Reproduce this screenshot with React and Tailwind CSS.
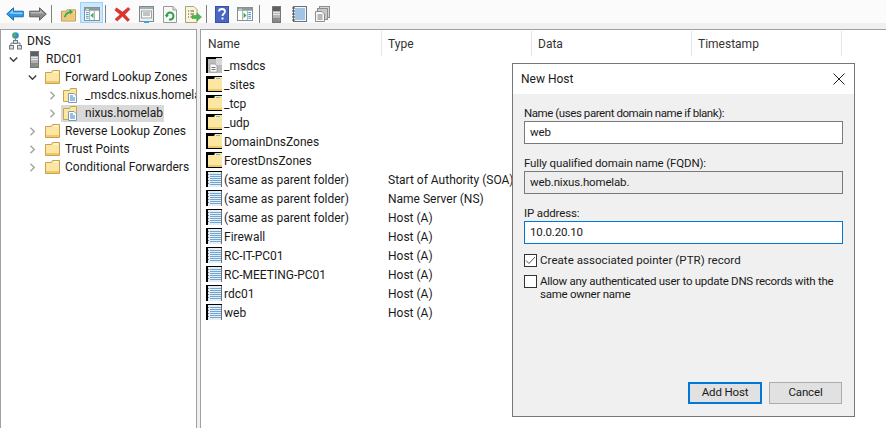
import React from 'react';

const FOLDER_A = '#fbe6a2';
const FOLDER_B = '#f0c96a';
const FOLDER_EDGE = '#c9a24f';

function BackIcon() {
  return (
    <svg width="18" height="14" viewBox="0 0 18 14">
      <path d="M.7 7 7.5.8v3.4h9.8v5.6H7.5v3.4z" fill="#2e9ae6" stroke="#1b6fb5" />
      <path d="M3 6.5 7 3v2.5h9.5v1.7z" fill="#8fd2f7" />
    </svg>
  );
}

function ForwardIcon() {
  return (
    <svg width="18" height="14" viewBox="0 0 18 14">
      <path d="M17.3 7 10.5.8v3.4H.7v5.6h9.8v3.4z" fill="#8b8b8b" stroke="#5f5f5f" />
      <path d="M1.5 5h9.5V3l4 3.5H1.5z" fill="#b9b9b9" />
    </svg>
  );
}

function UpFolderIcon() {
  return (
    <svg width="15" height="15" viewBox="0 0 16 16">
      <path d="M.5 4.500h5l1-1.500h9v12H.5z" fill="#f3d58d" stroke="#b5935a" />
      <path d="M1.500 6h13v8h-13z" fill="#eec878" />
      <path d="M3 11c1-4 3-6 6-6.500V2.500L13 5 9.500 8V6.300C7 7 5.500 8.500 5 11z" fill="#3aa655" />
    </svg>
  );
}

function WindowIcon({ arrow }) {
  return (
    <svg width="16" height="14" viewBox="0 0 17 15">
      <rect x=".5" y=".5" width="16" height="14" fill="#fff" stroke="#7d8a8f" />
      <rect x="1" y="1" width="15" height="3" fill="#8f9a9e" />
      <rect x="2" y="2" width="3" height="1" fill="#eee" />
      <path d="M6 4v10M11 4v10" stroke="#9aa5a9" />
      {arrow === 'left' ? (
        <>
          <path d="M2 6h3M2 8h3M2 10h3M2 12h3" stroke="#3d8fd0" />
          <path d="M10 6v6L7 9z" fill="#2fae4a" />
        </>
      ) : (
        <>
          <path d="M7 6v6l3-3z" fill="#2fae4a" />
          <path d="M12 6h3M12 8h3M12 10h3M12 12h3" stroke="#3d8fd0" />
        </>
      )}
    </svg>
  );
}

function DeleteIcon() {
  return (
    <svg width="17" height="16" viewBox="0 0 18 16">
      <path d="M2.500 1.500 9 6 15 1l2 2-5.500 5.500L16.500 14l-2 2L9 10.500 3.500 15.500 1 13.500 6.500 8.500 1 4z" fill="#e2322d" stroke="#b62624" strokeWidth=".5" />
    </svg>
  );
}

function PropertiesIcon() {
  return (
    <svg width="15" height="17" viewBox="0 0 15 17">
      <rect x=".5" y=".5" width="14" height="15" fill="#eef0f0" stroke="#808a8e" />
      <rect x="1" y="1" width="13" height="2" fill="#a4adb0" />
      <rect x="2.500" y="5" width="10" height="7" fill="#fbfbfb" stroke="#9aa2a5" />
      <path d="M4 7h7M4 9h7" stroke="#8a8a8a" />
      <rect x="5" y="15" width="5" height="2" fill="#38a3e0" />
    </svg>
  );
}

function RefreshIcon() {
  return (
    <svg width="14" height="17" viewBox="0 0 14 17">
      <path d="M.5.5H10l3.500 3.500v12.500H.5z" fill="#f8f8f8" stroke="#9a9a9a" />
      <path d="M10 .5V4h3.500" fill="#ddd" stroke="#9a9a9a" />
      <path d="M3.500 10a3.500 3.500 0 1 1 2.500 3.400" fill="none" stroke="#2f9e44" strokeWidth="2" />
      <path d="M1.800 9h4l-2 2.800z" fill="#2f9e44" />
    </svg>
  );
}

function ExportIcon() {
  return (
    <svg width="17" height="17" viewBox="0 0 17 17">
      <path d="M.5.500H9l3 3v13H.5z" fill="#fbf5d8" stroke="#a8a27e" />
      <path d="M3 5h1M3 8h1M3 11h1M5.500 5H9M5.500 8H9M5.500 11H8" stroke="#555" />
      <path d="M7 9.500h5V7l4.500 4-4.500 4v-2.500H7z" fill="#4cb84c" stroke="#379237" strokeWidth=".5" />
    </svg>
  );
}

function HelpIcon() {
  return (
    <svg width="14" height="17" viewBox="0 0 14 17">
      <rect width="14" height="17" fill="#3a51a8" />
      <rect x="1" y="1" width="12" height="15" fill="#4a66c2" />
      <path d="M4 5.500C4 3.500 5.500 3 7 3c2 0 3 1 3 2.500C10 8 7.500 7.500 7.500 10" fill="none" stroke="#fff" strokeWidth="1.800" />
      <rect x="6.500" y="11.500" width="2" height="2" fill="#fff" />
    </svg>
  );
}

function ServerIcon() {
  return (
    <svg width="9" height="17" viewBox="0 0 9 17">
      <rect x=".5" y=".5" width="8" height="16" fill="#b4b4b4" stroke="#777" />
      <rect x="1" y="1" width="7" height="4" fill="#5f5f5f" />
      <rect x="1" y="6" width="7" height="1" fill="#e8e8e8" />
      <rect x="1" y="8" width="7" height="1" fill="#e8e8e8" />
      <rect x="1" y="12" width="7" height="4" fill="#8a8a8a" />
      <rect x="6" y="13" width="1.500" height="1.500" fill="#6cc24a" />
    </svg>
  );
}

function NotebookIcon() {
  return (
    <svg width="15" height="16" viewBox="0 0 15 16">
      <rect x="1.500" y=".5" width="13" height="15" fill="#f4f7fa" stroke="#6b7278" />
      <path d="M3 3h10M3 5h10M3 7h10M3 9h10M3 11h10M3 13h10" stroke="#4c93cf" />
      <path d="M0 2h3M0 5h3M0 8h3M0 11h3M0 14h3" stroke="#444" />
    </svg>
  );
}

function CopiesIcon() {
  return (
    <svg width="15" height="16" viewBox="0 0 15 16">
      <rect x="4.500" y=".5" width="10" height="11" fill="#d6d6d6" stroke="#8d8d8d" />
      <rect x="2.500" y="2.500" width="10" height="11" fill="#c8c8c8" stroke="#8d8d8d" />
      <path d="M.5 5.500H7l2.500 2.500v7.500h-9z" fill="#f8f8f8" stroke="#8d8d8d" />
      <path d="M2.500 9h5M2.500 11h5M2.500 13h5" stroke="#777" />
    </svg>
  );
}

function DnsIcon() {
  return (
    <svg width="13" height="18" viewBox="0 0 13 18">
      <circle cx="6.500" cy="3.500" r="3.300" fill="#2f8fd0" />
      <path d="M4.500 2c1-1.500 3-1 3 .5S5.500 5 5.500 6.500C4 5.500 3.500 3.500 4.500 2z" fill="#55b24a" />
      <path d="M6.500 7v3M2 13v-2h9v2" fill="none" stroke="#777" />
      <rect x="4.500" y="8.500" width="4" height="3" fill="#ddd" stroke="#6f7c86" />
      <rect x=".5" y="13.500" width="4" height="3.500" fill="#ddd" stroke="#6f7c86" />
      <rect x="8.500" y="13.500" width="4" height="3.500" fill="#ddd" stroke="#6f7c86" />
    </svg>
  );
}

function FolderIcon() {
  return (
    <svg width="15" height="14" viewBox="0 0 15 14">
      <path d="M.5 2.500h6l1-2h7v13H.5z" fill={FOLDER_A} stroke={FOLDER_EDGE} />
      <path d="M1 4h13v9H1z" fill={FOLDER_A} />
      <path d="M1 11h13v2H1z" fill={FOLDER_B} />
      <rect x="9" y="1.500" width="4" height="1" fill="#fff" />
    </svg>
  );
}

function ZoneIcon() {
  return (
    <svg width="15" height="15" viewBox="0 0 15 15">
      <path d="M.5 2.500h6l1-2h6v13H.5z" fill={FOLDER_A} stroke={FOLDER_EDGE} />
      <path d="M5.500 5.500H11l2.500 2.500v6.500h-8z" fill="#fff" stroke="#7f9ab8" />
      <path d="M7 8h3M7 10h5M7 12h5" stroke="#2f7fc4" />
    </svg>
  );
}

function ListFolderIcon() {
  return (
    <svg width="16" height="16" viewBox="0 0 16 16" className="shrink-0">
      <rect width="16" height="16" fill="#000" />
      <path d="M2 3h6l1-2h7v14H2z" fill={FOLDER_A} />
      <path d="M2 13h14v2H2z" fill={FOLDER_B} />
      <rect x="10" y="2" width="4" height="1" fill="#6fb5e8" />
    </svg>
  );
}

function ListDelegationIcon() {
  return (
    <svg width="16" height="16" viewBox="0 0 16 16" className="shrink-0">
      <rect width="16" height="16" fill="#000" />
      <rect x="2" y="2" width="14" height="14" fill="#bcbcbc" />
      <rect x="10" y="1" width="6" height="7" fill="#d8d8d8" />
      <path d="M4 7h5l2 2v6H4z" fill="#fafafa" stroke="#888" strokeWidth=".6" />
      <path d="M5.500 10.500h4M5.500 12.500h4" stroke="#777" />
    </svg>
  );
}

function ListRecordIcon() {
  return (
    <svg width="16" height="16" viewBox="0 0 16 16" className="shrink-0">
      <rect width="16" height="16" fill="#000" />
      <rect x="2" y="1" width="14" height="15" fill="#e6edf3" />
      <path d="M4 3.500h11M4 5.500h11M4 7.500h11M4 9.500h11M4 11.500h11M4 13.500h11" stroke="#6ea6d6" />
      <path d="M2 3.500h1M2 6.500h1M2 9.500h1M2 12.500h1" stroke="#777" />
      <path d="M15.500 1v15" stroke="#6b7278" />
    </svg>
  );
}

function Chevron({ open }) {
  return (
    <svg width="9" height="9" viewBox="0 0 9 9" className="shrink-0">
      {open ? (
        <path d="M.8 2.500 4.500 6.200 8.200 2.500" fill="none" stroke="#404040" strokeWidth="1.500" />
      ) : (
        <path d="M2.500.8 6.200 4.500 2.500 8.200" fill="none" stroke="#a6a6a6" strokeWidth="1.500" />
      )}
    </svg>
  );
}

function Tool({ children, width = 'w-[23px]', active }) {
  return (
    <div
      className={`${width} h-[21px] flex items-center justify-center pt-[3px] border ${
        active ? 'bg-[#cce8ff] border-[#99d1ff]' : 'border-transparent'
      }`}
    >
      {children}
    </div>
  );
}

function Sep({ className }) {
  return <div className={`w-px h-[18px] mt-[3px] bg-[#808080] ${className}`} />;
}

function Toolbar() {
  return (
    <div className="h-[23px] bg-[#fbfbfb] flex items-end pl-[3px] shrink-0">
      <Tool><BackIcon /></Tool>
      <Tool><ForwardIcon /></Tool>
      <Sep className="ml-[2px] mr-[5px]" />
      <Tool><UpFolderIcon /></Tool>
      <Tool active><WindowIcon arrow="left" /></Tool>
      <Sep className="ml-[2px] mr-[4px]" />
      <Tool width="w-[24px]"><DeleteIcon /></Tool>
      <Tool width="w-[24px]"><PropertiesIcon /></Tool>
      <Tool width="w-[24px]"><RefreshIcon /></Tool>
      <Tool width="w-[22px]"><ExportIcon /></Tool>
      <Sep className="ml-[2px] mr-[4px]" />
      <Tool width="w-[22px]"><HelpIcon /></Tool>
      <Tool width="w-[24px]"><WindowIcon arrow="right" /></Tool>
      <Sep className="ml-[2px] mr-[5px]" />
      <Tool><ServerIcon /></Tool>
      <Tool><NotebookIcon /></Tool>
      <Tool><CopiesIcon /></Tool>
    </div>
  );
}

const TREE = [
  { label: 'DNS', pad: 'pl-[8px]', icon: <DnsIcon />, gap: 'ml-[5px]' },
  { label: 'RDC01', pad: 'pl-[8px]', chevron: 'open', slot: 'mr-[9px]', icon: <ServerIcon />, gap: 'ml-[4px]' },
  { label: 'Forward Lookup Zones', pad: 'pl-[27px]', chevron: 'open', slot: 'mr-[8px]', icon: <FolderIcon />, gap: 'ml-[5px]' },
  { label: '_msdcs.nixus.homelab', pad: 'pl-[47px]', chevron: 'closed', slot: 'mr-[6px]', icon: <ZoneIcon />, gap: 'ml-[7px]' },
  { label: 'nixus.homelab', pad: 'pl-[47px]', chevron: 'closed', slot: 'mr-[4px]', icon: <ZoneIcon />, gap: 'ml-[7px]', selected: true },
  { label: 'Reverse Lookup Zones', pad: 'pl-[27px]', chevron: 'closed', slot: 'mr-[8px]', icon: <FolderIcon />, gap: 'ml-[5px]' },
  { label: 'Trust Points', pad: 'pl-[27px]', chevron: 'closed', slot: 'mr-[8px]', icon: <FolderIcon />, gap: 'ml-[5px]' },
  { label: 'Conditional Forwarders', pad: 'pl-[27px]', chevron: 'closed', slot: 'mr-[8px]', icon: <FolderIcon />, gap: 'ml-[5px]' },
];

function TreePane() {
  return (
    <div className="w-[197px] shrink-0 bg-white border border-b-0 border-[#a0a0a0] overflow-hidden pt-[2px]">
      {TREE.map((n) => (
        <div key={n.label} className={`h-[18px] flex items-center whitespace-nowrap ${n.pad}`}>
          {n.chevron && (
            <span className={`w-[9px] shrink-0 flex ${n.slot}`}>
              <Chevron open={n.chevron === 'open'} />
            </span>
          )}
          <span className={`flex items-center h-[17px] ${n.selected ? 'bg-[#d9d9d9] w-[103px] pl-[2px]' : ''}`}>
            <span className={`flex justify-center shrink-0 ${n.chevron ? 'w-[15px]' : 'w-[13px]'}`}>{n.icon}</span>
            <span className={n.gap}>{n.label}</span>
          </span>
        </div>
      ))}
    </div>
  );
}

const ROWS = [
  { name: '_msdcs', type: '', icon: <ListDelegationIcon /> },
  { name: '_sites', type: '', icon: <ListFolderIcon /> },
  { name: '_tcp', type: '', icon: <ListFolderIcon /> },
  { name: '_udp', type: '', icon: <ListFolderIcon /> },
  { name: 'DomainDnsZones', type: '', icon: <ListFolderIcon /> },
  { name: 'ForestDnsZones', type: '', icon: <ListFolderIcon /> },
  { name: '(same as parent folder)', type: 'Start of Authority (SOA)', icon: <ListRecordIcon /> },
  { name: '(same as parent folder)', type: 'Name Server (NS)', icon: <ListRecordIcon /> },
  { name: '(same as parent folder)', type: 'Host (A)', icon: <ListRecordIcon /> },
  { name: 'Firewall', type: 'Host (A)', icon: <ListRecordIcon /> },
  { name: 'RC-IT-PC01', type: 'Host (A)', icon: <ListRecordIcon /> },
  { name: 'RC-MEETING-PC01', type: 'Host (A)', icon: <ListRecordIcon /> },
  { name: 'rdc01', type: 'Host (A)', icon: <ListRecordIcon /> },
  { name: 'web', type: 'Host (A)', icon: <ListRecordIcon /> },
];

function ListPane() {
  return (
    <div className="flex-1 bg-white border-l border-t border-[#a0a0a0] overflow-hidden">
      <div className="h-[26px] flex items-center text-[#333] pt-[1px]">
        <div className="w-[181px] h-full pl-[7px] flex items-center border-r border-[#e5e5e5]">Name</div>
        <div className="w-[150px] h-full pl-[6px] flex items-center border-r border-[#e5e5e5]">Type</div>
        <div className="w-[160px] h-full pl-[6px] flex items-center border-r border-[#e5e5e5]">Data</div>
        <div className="w-[150px] h-full pl-[6px] flex items-center border-r border-[#e5e5e5]">Timestamp</div>
      </div>
      {ROWS.map((r, i) => (
        <div key={i} className="h-[19px] flex items-start whitespace-nowrap">
          <div className="w-[187px] h-full pl-[5px] pt-[1px] flex items-start gap-[2px]">
            {r.icon}
            <span className="leading-[19px]">{r.name}</span>
          </div>
          <div className="leading-[21px]">{r.type}</div>
        </div>
      ))}
    </div>
  );
}

function Field({ label, value, className, labelClass = '' }) {
  return (
    <div className="flex flex-col">
      <div className={`h-[17px] leading-[18px] ${labelClass}`}>{label}</div>
      <div className={`h-[23px] border flex items-center pl-[5px] ${className}`}>{value}</div>
    </div>
  );
}

function NewHostDialog() {
  return (
    <div className="absolute left-[512px] top-[63px] w-[343px] h-[354px] border border-[#777] bg-[#f0f0f0] flex flex-col">
      <div className="h-[30px] bg-white flex items-center justify-between pl-[8px] pr-[9px] shrink-0">
        <span>New Host</span>
        <svg width="12" height="12" viewBox="0 0 12 12">
          <path d="M.5.5l11 11M11.500.5l-11 11" stroke="#222" strokeWidth="1" />
        </svg>
      </div>
      <div className="flex-1 flex flex-col px-[11px] pt-[10px] text-[11.5px] tracking-[-0.15px]">
        <div className="flex flex-col gap-[10px]">
          <Field
            label="Name (uses parent domain name if blank):"
            labelClass="tracking-[-0.43px]"
            value="web"
            className="bg-white border-[#7a7a7a]"
          />
          <Field label="Fully qualified domain name (FQDN):" value="web.nixus.homelab." className="bg-[#eeeeee] border-[#7a7a7a]" />
          <Field label="IP address:" value="10.0.20.10" className="bg-white border-[#0078d7]" />
        </div>
        <div className="flex items-center h-[15px] mt-[9px]">
          <div className="w-[13px] h-[13px] border border-[#333] bg-white flex items-center justify-center shrink-0">
            <svg width="11" height="9" viewBox="0 0 11 9">
              <path d="M1 4.500 4 7.500 10 1" fill="none" stroke="#555" strokeWidth="1" />
            </svg>
          </div>
          <span className="ml-[3px] tracking-[0.05px]">Create associated pointer (PTR) record</span>
        </div>
        <div className="flex items-start mt-[6px]">
          <div className="w-[13px] h-[13px] border border-[#333] bg-white shrink-0 mt-[1px]" />
          <span className="ml-[3px] mt-[1px] leading-[13px] w-[300px] tracking-[-0.27px]">
            Allow any authenticated user to update DNS records with the same owner name
          </span>
        </div>
        <div className="mt-auto mb-[12px] flex justify-end gap-[7px] pr-[1px]">
          <button type="button" className="w-[74px] h-[22px] bg-[#e1e1e1] border-2 border-[#0078d7]">Add Host</button>
          <button type="button" className="w-[73px] h-[22px] bg-[#e1e1e1] border border-[#adadad]">Cancel</button>
        </div>
      </div>
    </div>
  );
}

export default function App() {
  return (
    <div className="relative w-[886px] h-[428px] overflow-hidden bg-[#f0f0f0] text-[12px] text-[#1a1a1a] font-['Roboto','Noto_Sans',sans-serif]">
      <div className="h-full flex flex-col">
        <Toolbar />
        <div className="flex-1 flex pt-[6px] gap-[3px] min-h-0">
          <TreePane />
          <ListPane />
        </div>
      </div>
      <NewHostDialog />
    </div>
  );
}
